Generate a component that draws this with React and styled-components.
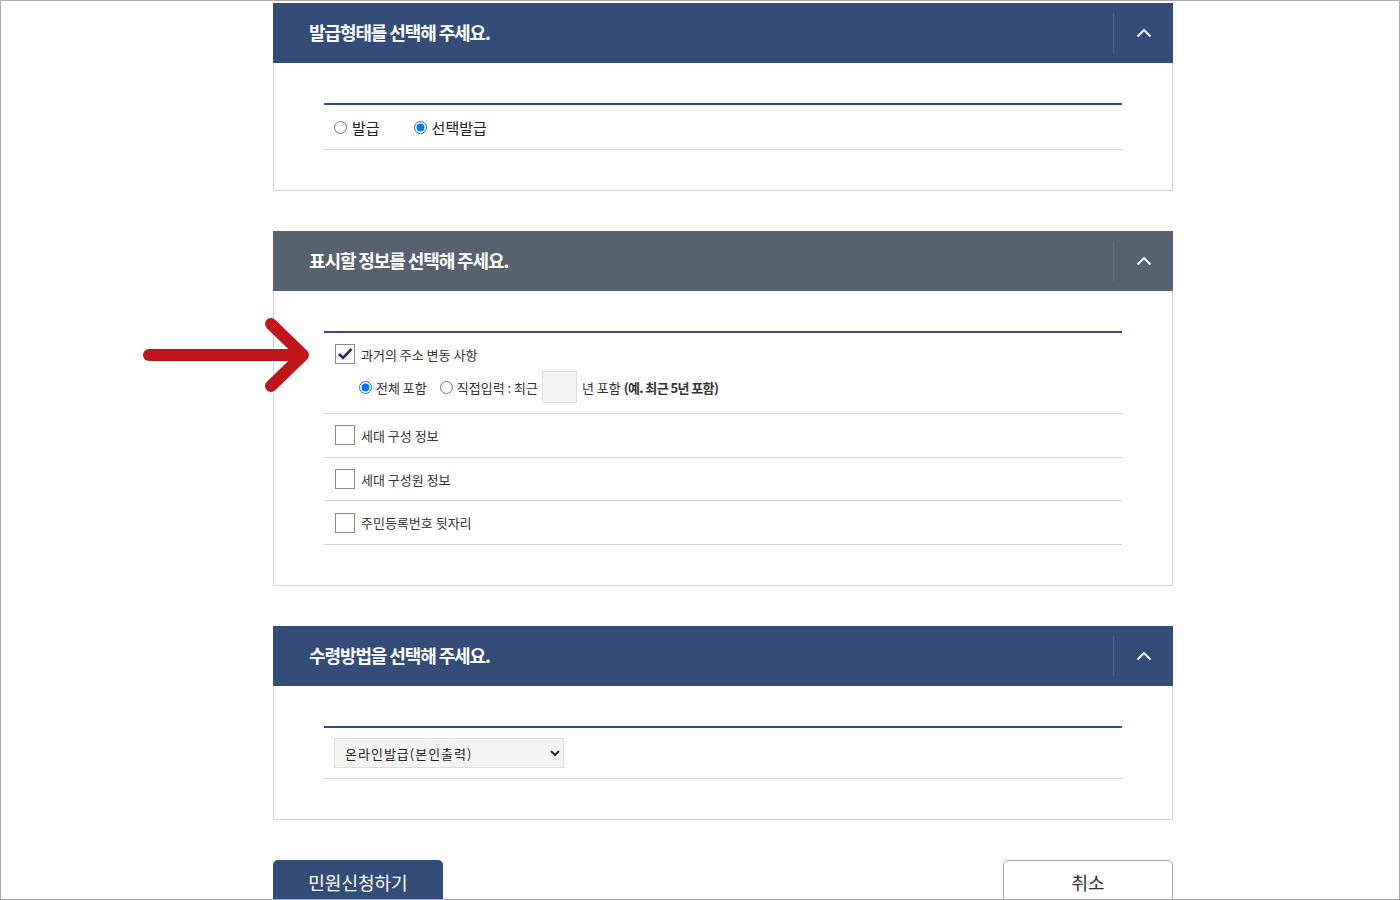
import React from 'react';
import styled, { createGlobalStyle } from 'styled-components';

const GlobalStyle = createGlobalStyle`
    html, body {
        margin: 0;
        padding: 0;
        background: #FFFFFF;
        font-family: 'Noto Sans CJK KR', 'Noto Sans', sans-serif;
        color: #333;
    }
    * { box-sizing: border-box; }
`

export default function App() {
    return (
        <Frame>
            <GlobalStyle />
            <Column>
                <Panel title="발급형태를 선택해 주세요." tone="navy">
                    <SimpleRow>
                        <RadioLabel><Radio name="type" />발급</RadioLabel>
                        <RadioLabel><Radio name="type" defaultChecked />선택발급</RadioLabel>
                    </SimpleRow>
                </Panel>

                <Panel title="표시할 정보를 선택해 주세요." tone="slate">
                    <OptionRow first>
                        <CheckLabel>
                            <CheckBox checked />
                            과거의 주소 변동 사항
                        </CheckLabel>
                        <SubOptions>
                            <SmallRadio><Radio name="range" defaultChecked />전체 포함</SmallRadio>
                            <SmallRadio><Radio name="range" />직접입력 : 최근</SmallRadio>
                            <YearInput />
                            <span>년 포함 <Example>(예. 최근 5년 포함)</Example></span>
                        </SubOptions>
                    </OptionRow>
                    <OptionRow>
                        <CheckLabel><CheckBox />세대 구성 정보</CheckLabel>
                    </OptionRow>
                    <OptionRow>
                        <CheckLabel><CheckBox />세대 구성원 정보</CheckLabel>
                    </OptionRow>
                    <OptionRow>
                        <CheckLabel><CheckBox />주민등록번호 뒷자리</CheckLabel>
                    </OptionRow>
                </Panel>

                <Panel title="수령방법을 선택해 주세요." tone="navy">
                    <SelectRow>
                        <Select defaultValue="online">
                            <option value="online">온라인발급(본인출력)</option>
                        </Select>
                    </SelectRow>
                </Panel>

                <ButtonBar>
                    <SubmitButton>민원신청하기</SubmitButton>
                    <CancelButton>취소</CancelButton>
                </ButtonBar>
            </Column>
            <Arrow />
        </Frame>
    );
}

function Panel({ title, tone, children }) {
    return (
        <PanelBox>
            <PanelHeader tone={tone}>
                <PanelTitle>{title}</PanelTitle>
                <ToggleButton tone={tone}>
                    <svg width="16" height="10" viewBox="0 0 16 10">
                        <polyline points="1.5,8.5 8,2 14.5,8.5" fill="none" stroke="#fff" strokeWidth="1.8" />
                    </svg>
                </ToggleButton>
            </PanelHeader>
            <PanelBody>
                <ListTable>{children}</ListTable>
            </PanelBody>
        </PanelBox>
    );
}

function CheckBox({ checked }) {
    return (
        <Box>
            {checked && (
                <svg width="16" height="14" viewBox="0 0 16 14">
                    <polyline points="2,7 6,11 14.5,2" fill="none" stroke="#1f2d6b" strokeWidth="2.6" />
                </svg>
            )}
        </Box>
    );
}

function Arrow() {
    return (
        <ArrowWrap>
            <svg width="180" height="80" viewBox="0 0 180 80">
                <g fill="none" stroke="#c0161a" strokeWidth="12" strokeLinecap="round" strokeLinejoin="round">
                    <line x1="8" y1="37" x2="160" y2="37" />
                    <polyline points="130,6 162,37 130,68" />
                </g>
            </svg>
        </ArrowWrap>
    );
}

const Frame = styled.div`
    position: relative;
    width: 1400px;
    height: 900px;
    border: 1px solid #aaa;
    overflow: hidden;
    background: #fff;
`

const Column = styled.div`
    width: 900px;
    margin-left: 272px;
    padding-top: 2px;
    display: flex;
    flex-direction: column;
    gap: 40px;
`

const PanelBox = styled.section`
    border: 1px solid #d5d5d5;
    border-top: none;
`

const PanelHeader = styled.div`
    display: flex;
    align-items: center;
    height: 60px;
    margin: 0 -1px;
    background: ${p => p.tone === 'slate' ? '#56636e' : '#344d78'};
`

const PanelTitle = styled.h2`
    flex: 1;
    margin: 0;
    padding: 0 0 3px 36px;
    font-size: 18px;
    font-weight: 700;
    letter-spacing: -1.1px;
    color: #fff;
`

const ToggleButton = styled.div`
    width: 60px;
    height: 40px;
    display: flex;
    align-items: center;
    justify-content: center;
    border-left: 1px solid ${p => p.tone === 'slate' ? '#66737e' : '#4a6088'};
`

const PanelBody = styled.div`
    padding: 40px 50px;
`

const ListTable = styled.div`
    border-top: 2px solid #344d78;
`

const SimpleRow = styled.div`
    display: flex;
    align-items: center;
    gap: 34px;
    height: 45px;
    padding-left: 10px;
    border-bottom: 1px solid #d5d5d5;
`

const RadioLabel = styled.label`
    display: flex;
    align-items: center;
    gap: 5px;
    font-size: 15px;
    color: #222;
`

const Radio = styled.input.attrs({ type: 'radio' })`
    margin: 0;
    width: 13px;
    height: 13px;
`

const OptionRow = styled.div`
    display: flex;
    flex-direction: column;
    justify-content: center;
    gap: 7px;
    padding: ${p => p.first ? '11px 0 10px 11px' : '0 0 0 11px'};
    min-height: 43.7px;
    border-bottom: 1px solid #d5d5d5;
`

const CheckLabel = styled.label`
    display: flex;
    align-items: center;
    gap: 6px;
    font-size: 13px;
    color: #333;
`

const Box = styled.span`
    width: 20px;
    height: 20px;
    border: 1px solid #888;
    display: flex;
    align-items: center;
    justify-content: center;
    background: #fff;
`

const SubOptions = styled.div`
    display: flex;
    align-items: center;
    padding-left: 24px;
    font-size: 13px;
    color: #333;
    gap: 4px;
`

const SmallRadio = styled.label`
    display: flex;
    align-items: center;
    gap: 4px;
    margin-right: 9px;
`

const YearInput = styled.input.attrs({ type: 'text' })`
    width: 35px;
    height: 32px;
    background: #f4f4f4;
    border: 1px solid #ddd;
    margin: 0 1px 0 -9px;
`

const Example = styled.b`
    font-weight: 700;
    letter-spacing: -0.6px;
    color: #333;
`

const SelectRow = styled.div`
    display: flex;
    align-items: center;
    height: 51px;
    padding-left: 10px;
    border-bottom: 1px solid #d5d5d5;
`

const Select = styled.select`
    width: 230px;
    height: 30px;
    background: #f4f4f4;
    border: 1px solid #ddd;
    padding: 0 6px;
    font-family: 'Noto Sans CJK KR', sans-serif;
    font-size: 13px;
    letter-spacing: 1px;
    color: #222;
`

const ButtonBar = styled.div`
    display: flex;
    justify-content: space-between;
`

const SubmitButton = styled.button`
    width: 170px;
    height: 52px;
    background: #344d78;
    border: none;
    border-radius: 5px;
    color: #fff;
    font-family: 'Noto Sans CJK KR', sans-serif;
    font-size: 18px;
    padding-bottom: 10px;
`

const CancelButton = styled.button`
    width: 170px;
    height: 52px;
    background: #fff;
    border: 1px solid #aaa;
    border-radius: 5px;
    color: #333;
    font-family: 'Noto Sans CJK KR', sans-serif;
    font-size: 18px;
    padding-bottom: 10px;
`

const ArrowWrap = styled.div`
    position: absolute;
    left: 140px;
    top: 317px;
`
